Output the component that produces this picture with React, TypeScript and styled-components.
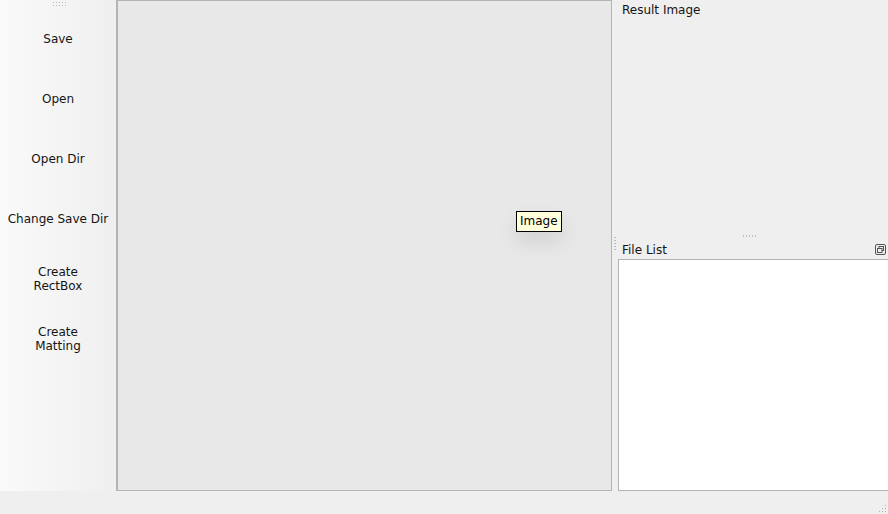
import styled, { createGlobalStyle } from 'styled-components'

const GlobalStyle = createGlobalStyle`
  html, body {
    margin: 0;
    padding: 0;
    background: #efefef;
  }
  body {
    font-family: "DejaVu Sans", "Liberation Sans", sans-serif;
    font-size: 12px;
    color: #141414;
  }
`

const Window = styled.div`
  width: 888px;
  height: 514px;
  display: flex;
  flex-direction: column;
  background: #efefef;
  overflow: hidden;
`

const Main = styled.div`
  height: 491px;
  display: flex;
`

const ToolBar = styled.div`
  width: 116px;
  display: flex;
  flex-direction: column;
  background: linear-gradient(to right, #fafafa, #efefef);
  position: relative;
  padding-top: 9px;
  box-sizing: border-box;
`

const Grip = styled.div`
  position: absolute;
  top: 1px;
  left: 52px;
  width: 16px;
  height: 5px;
  background-image: radial-gradient(circle, #b8b8b8 0.6px, transparent 0.8px);
  background-size: 3px 3px;
`

const ToolButton = styled.div`
  height: 60px;
  display: flex;
  align-items: center;
  justify-content: center;
  text-align: center;
  line-height: 14px;
  white-space: pre-line;
`

const Canvas = styled.div`
  width: 496px;
  box-sizing: border-box;
  background: #e8e8e8;
  border: 1px solid #b4b4b4;
  border-left-width: 2px;
  position: relative;
`

const Tooltip = styled.div`
  position: absolute;
  left: 398px;
  top: 210px;
  padding: 2px 3px;
  background: #ffffdc;
  border: 1px solid #000;
  color: #000;
  line-height: 15px;
  box-shadow: 0 10px 20px rgba(0, 0, 0, 0.1);
`

const Dock = styled.div`
  flex: 1;
  display: flex;
  flex-direction: column;
`

const DockTitle = styled.div`
  height: 19px;
  display: flex;
  align-items: center;
  padding-left: 10px;
  padding-right: 2px;
  justify-content: space-between;
  position: relative;
`

const ResultBody = styled.div`
  flex: 1;
`

const Splitter = styled.div`
  height: 8px;
  padding-top: 2px;
  display: flex;
  justify-content: center;
  align-items: center;
`

const HDots = styled.div`
  width: 16px;
  height: 2px;
  background-image: radial-gradient(circle, #c0c0c0 0.6px, transparent 0.8px);
  background-size: 3px 2px;
`

const VDots = styled.div`
  position: absolute;
  left: 2px;
  top: -4px;
  width: 2px;
  height: 16px;
  background-image: radial-gradient(circle, #b8b8b8 0.6px, transparent 0.8px);
  background-size: 2px 3px;
`

const FloatButton = styled.div`
  width: 12px;
  height: 12px;
  display: flex;
  align-items: center;
  justify-content: center;
`

const ListBox = styled.div`
  height: 232px;
  margin-left: 6px;
  background: #fff;
  border: 1px solid #b4b4b4;
  border-right: none;
  box-sizing: border-box;
`

const StatusBar = styled.div`
  flex: 1;
  position: relative;
`

const SizeGrip = styled.svg`
  position: absolute;
  right: 1px;
  bottom: 1px;
`

export default function App() {
  const tools = ['Save', 'Open', 'Open Dir', 'Change Save Dir', 'Create\nRectBox', 'Create\nMatting']
  return (
    <Window>
      <GlobalStyle />
      <Main>
        <ToolBar>
          <Grip />
          {tools.map(t => (
            <ToolButton key={t}>{t}</ToolButton>
          ))}
        </ToolBar>
        <Canvas>
          <Tooltip>Image</Tooltip>
        </Canvas>
        <Dock>
          <DockTitle>Result Image</DockTitle>
          <ResultBody />
          <Splitter>
            <HDots />
          </Splitter>
          <DockTitle>
            <VDots />
            File List
            <FloatButton>
              <svg width="11" height="11" viewBox="0 0 11 11" fill="none" stroke="#555" strokeWidth="1">
                <rect x="0.5" y="0.5" width="10" height="10" rx="1.5" />
                <rect x="4" y="2.5" width="4.5" height="4" />
                <rect x="2.5" y="4.5" width="4.5" height="4" fill="#efefef" />
              </svg>
            </FloatButton>
          </DockTitle>
          <ListBox />
        </Dock>
      </Main>
      <StatusBar>
        <SizeGrip width="10" height="10" viewBox="0 0 10 10">
          {[[8, 2], [5, 5], [8, 5], [2, 8], [5, 8], [8, 8]].map(([x, y]) => (
            <rect key={`${x}-${y}`} x={x} y={y} width="1" height="1" fill="#b0b0b0" />
          ))}
        </SizeGrip>
      </StatusBar>
    </Window>
  )
}
